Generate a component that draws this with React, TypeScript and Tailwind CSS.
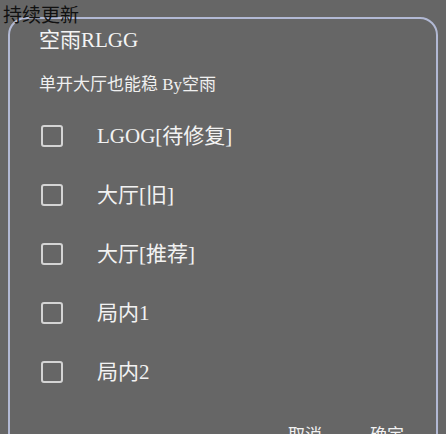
import React from 'react';

const options = ['LGOG[待修复]', '大厅[旧]', '大厅[推荐]', '局内1', '局内2'];

const font = { fontFamily: '"Liberation Serif", "Noto Sans CJK SC", serif' };

export default function App() {
  const [checked, setChecked] = React.useState<boolean[]>(options.map(() => false));

  return (
    <div className="relative w-[446px] h-[434px] overflow-hidden bg-[#666666]" style={font}>
      {/* floating label over the dialog edge */}
      <div className="absolute left-[3px] top-[3px] z-10 text-[19px] leading-[26px] text-[#111111]">持续更新</div>

      <div className="mx-[8px] mt-[17px] h-[460px] rounded-[18px] border-2 border-[#b2b9d4] bg-[#666666] pt-[7px] pl-[29px] pr-[30px]">
        <div className="text-[21px] leading-[28px] text-[#f4f4f4]">空雨RLGG</div>
        <div className="mt-[20px] text-[17px] leading-[22px] text-[#f0f0f0]">单开大厅也能稳 By空雨</div>

        <div className="mt-[10px] flex flex-col">
          {options.map((label, i) => (
            <label key={label} className="flex h-[59px] items-center gap-[34px] pl-[2px] cursor-pointer">
              <span
                onClick={() => setChecked(c => c.map((v, j) => (j === i ? !v : v)))}
                className="flex h-[22px] w-[22px] items-center justify-center rounded-[3px] border-2 border-[#d4d4d4]"
              >
                {checked[i] && <span className="h-[10px] w-[10px] bg-[#d4d4d4]" />}
              </span>
              <span className="text-[21px] leading-[26px] text-[#f2f2f2]">{label}</span>
            </label>
          ))}
        </div>

        <div className="mt-[23px] flex justify-end gap-[48px] pr-[2px] text-[17px] leading-[24px] text-[#f2f2f2]">
          <button>取消</button>
          <button>确定</button>
        </div>
      </div>
    </div>
  );
}
